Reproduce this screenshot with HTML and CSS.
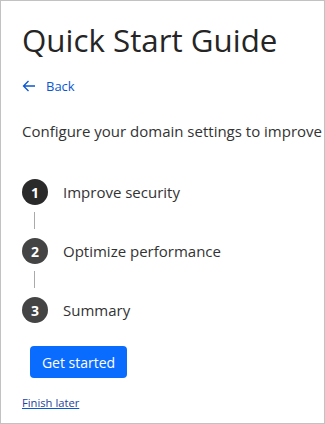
FILE: index.html
```html
<!DOCTYPE html>
<html lang="en">
<head>
    <meta charset="UTF-8">
    <meta name="viewport" content="width=device-width, initial-scale=1.0">
    <title>Quick Start Guide</title>
    <link rel="stylesheet" href="styles.css">
</head>
<body>
    <div class="page">
        <h1>Quick Start Guide</h1>

        <a class="back" href="#">
            <svg width="14" height="12" viewBox="0 0 14 12" fill="none" stroke="currentColor" stroke-width="1.3">
                <path d="M13 6H1.5M6.5 1L1.5 6l5 5"/>
            </svg>
            <span>Back</span>
        </a>

        <p class="intro">Configure your domain settings to improve security and performance.</p>

        <ol class="steps">
            <li class="step active"><span class="num">1</span><span class="label">Improve security</span></li>
            <li class="step"><span class="num">2</span><span class="label">Optimize performance</span></li>
            <li class="step"><span class="num">3</span><span class="label">Summary</span></li>
        </ol>

        <button class="start">Get started</button>

        <a class="later" href="#">Finish later</a>
    </div>
</body>
</html>
```

FILE: styles.css
```css
* {
    box-sizing: border-box;
}
body {
    margin: 0;
    font-family: 'Open Sans', 'Noto Sans', Arial, sans-serif;
    color: #333;
    background: white;
}
.page {
    width: 325px;
    height: 424px;
    border: 1px solid #c2c2c2;
    padding: 18px 0 0 21px;
    overflow: hidden;
    white-space: nowrap;
}
h1 {
    margin: 0;
    font-size: 31.3px;
    font-weight: 500;
    color: #252525;
    line-height: 42px;
}
.back {
    display: flex;
    align-items: center;
    gap: 10px;
    margin-top: 15px;
    color: #0b57d0;
    text-decoration: none;
    font-size: 13px;
    line-height: 20px;
}
.intro {
    margin: 23px 0 0;
    font-size: 15px;
    line-height: 24px;
    color: #333;
}
.steps {
    list-style: none;
    margin: 36px 0 0;
    padding: 0;
}
.step {
    display: flex;
    align-items: center;
    gap: 15px;
    height: 26px;
    font-size: 15px;
    color: #333;
}
.step + .step {
    margin-top: 33px;
    position: relative;
}
.step + .step::before {
    content: "";
    position: absolute;
    left: 12px;
    top: -26px;
    width: 1px;
    height: 17px;
    background: #aaa;
}
.num {
    width: 26px;
    height: 26px;
    border-radius: 50%;
    background: #444;
    color: white;
    font-weight: 700;
    font-size: 14px;
    display: flex;
    align-items: center;
    justify-content: center;
}
.active .num {
    background: #2a2a2a;
}
.start {
    display: block;
    margin: 23px 0 0 8px;
    width: 97px;
    height: 32px;
    border: none;
    border-radius: 4px;
    background: #0a6cff;
    color: white;
    font-family: inherit;
    font-size: 14px;
    cursor: pointer;
}
.later {
    display: inline-block;
    margin-top: 17px;
    font-size: 11.2px;
    color: #24439c;
    text-decoration-color: #0b57d0;
}
```
